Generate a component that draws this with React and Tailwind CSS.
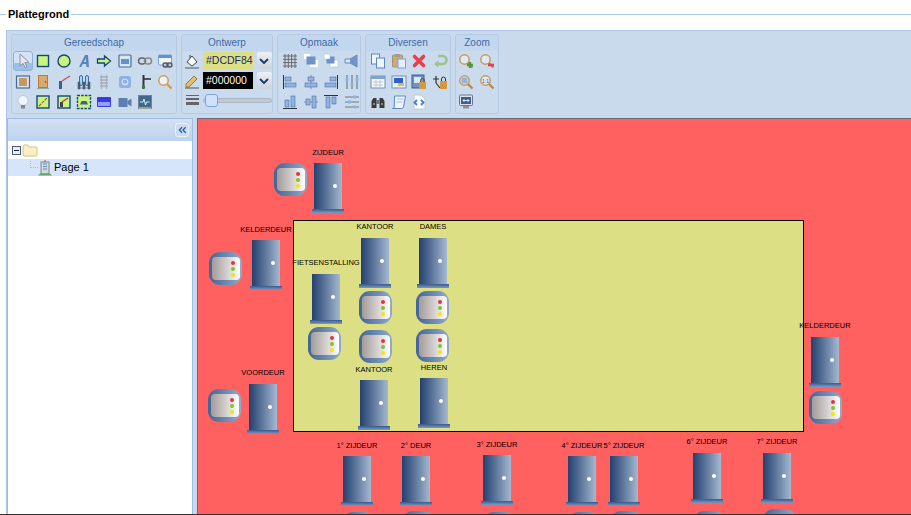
const doors = [
  { l: "ZIJDEUR", x: 314, y: 163, ly: 153 },
  { l: "KELDERDEUR", x: 252, y: 240, ly: 230 },
  { l: "FIETSENSTALLING", x: 312, y: 274, ly: 263 },
  { l: "KANTOOR", x: 361, y: 238, ly: 227 },
  { l: "DAMES", x: 419, y: 238, ly: 227 },
  { l: "KANTOOR", x: 360, y: 380, ly: 370 },
  { l: "HEREN", x: 420, y: 378, ly: 368 },
  { l: "VOORDEUR", x: 249, y: 384, ly: 373 },
  { l: "KELDERDEUR", x: 811, y: 337, ly: 326 },
  { l: "1° ZIJDEUR", x: 343, y: 456, ly: 446 },
  { l: "2° DEUR", x: 402, y: 456, ly: 446 },
  { l: "3° ZIJDEUR", x: 483, y: 455, ly: 445 },
  { l: "4° ZIJDEUR", x: 568, y: 456, ly: 446 },
  { l: "5° ZIJDEUR", x: 610, y: 456, ly: 446 },
  { l: "6° ZIJDEUR", x: 693, y: 453, ly: 442 },
  { l: "7° ZIJDEUR", x: 763, y: 453, ly: 442 },
];
const ctrls = [
  [274, 163], [209, 252], [308, 327], [359, 291], [416, 291], [359, 330], [416, 329], [208, 389], [809, 391],
  [342, 512], [402, 511], [483, 512], [568, 512], [610, 511], [693, 511], [763, 509],
];

function Door({ d }) {
  return (
    <>
      <div className="absolute w-[100px] text-center text-[7.500px] leading-[10px] text-black whitespace-nowrap" style={{ left: d.x - 234, top: d.ly - 124 }}>{d.l}</div>
      <div className="absolute w-[28px] h-[46px] bg-linear-to-r from-[#24406f] to-[#a5b9d0]" style={{ left: d.x - 198, top: d.y - 119 }}>
        <div className="absolute left-[19px] top-[21px] w-[4px] h-[4px] rounded-full bg-white" />
      </div>
      <div className="absolute w-[32px] h-[4px] bg-linear-to-b from-[#3b5a8c] to-[#7b9ac4]" style={{ left: d.x - 200, top: d.y - 73 }} />
    </>
  );
}
function Ctrl({ x, y }) {
  return (
    <div className="absolute w-[33px] h-[33px] rounded-[11px] pl-[3px] pr-[2px] py-[5px] bg-linear-to-r from-[#426495] to-[#92abcb]" style={{ left: x - 198, top: y - 119 }}>
      <div className="relative w-full h-full rounded-[4px] bg-linear-to-r from-[#a39b99] to-white">
        <div className="absolute left-[19px] top-[4px] w-[4px] h-[4px] rounded-full bg-[#e8303c]" />
        <div className="absolute left-[19px] top-[10px] w-[4px] h-[4px] rounded-full bg-[#7cc628]" />
        <div className="absolute left-[19px] top-[16px] w-[4px] h-[4px] rounded-full bg-[#f2e800]" />
      </div>
    </div>
  );
}

const S = ({ children }) => <svg viewBox="0 0 16 16" width="16" height="16" fill="none">{children}</svg>;
const Mag = ({ inner }) => (
  <S>
    <circle cx="6.500" cy="6.500" r="4.700" fill="#dfeaf6" stroke="#c79a5a" strokeWidth="1.500" />
    <path d="M10 10l4.500 4.500" stroke="#b8863f" strokeWidth="2.200" />
    {inner}
  </S>
);
const blue = "#8fb4e2", dk = "#3c5f96";

const tools = [
  <div key="0" className="w-[20px] h-[20px] rounded-[3px] border border-[#8fb0dc] bg-linear-to-b from-[#d3e2f6] from-60% to-[#9cc0ea] to-60% flex items-center justify-center">
    <S><path d="M5 1l0 12 3-2.600 2.200 4.400 1.800-.9-2.200-4.300 4-.4z" fill="#e4e8ee" stroke="#8d939e" /></S>
  </div>,
  <S key="1"><rect x="2.500" y="2.500" width="11" height="11" fill="#c9f57e" stroke="#13487a" strokeWidth="1.400" /></S>,
  <S key="2"><circle cx="8" cy="8" r="6" fill="#c9f57e" stroke="#13487a" strokeWidth="1.400" /></S>,
  <S key="3"><path d="M3 14L9 2h3l1 12h-2.600l-.2-3H6.800l-1.500 3zM7.800 9h2.200l-.3-4z" fill="#5a84c0" /></S>,
  <S key="4"><path d="M1.500 6h7V3l6 5-6 5v-3h-7z" fill="#c9f57e" stroke="#13487a" strokeWidth="1.300" /></S>,
  <S key="5"><rect x="2" y="2" width="12" height="12" rx="1" fill="#d8e6f4" stroke="#4a6ea0" strokeWidth="1.200" /><rect x="4" y="6" width="8" height="5" fill="#5f93c9" /></S>,
  <S key="6"><rect x="1.500" y="5" width="7" height="6" rx="3" stroke="#666" strokeWidth="1.500" /><rect x="7.500" y="5" width="7" height="6" rx="3" stroke="#888" strokeWidth="1.500" /></S>,
  <S key="7"><rect x="1.500" y="2" width="13" height="10" rx="1" fill="#eef4fb" stroke="#7ea2d0" /><rect x="1.500" y="2" width="13" height="3" fill="#5f93d9" /><rect x="6" y="10" width="5" height="4" rx="2" stroke="#555" strokeWidth="1.300" /><rect x="10" y="10" width="5" height="4" rx="2" stroke="#555" strokeWidth="1.300" /></S>,
  <S key="8"><rect x="1.500" y="2" width="13" height="12" fill="#d8e3f0" stroke="#4a6a94" strokeWidth="1.200" /><rect x="4" y="4" width="8" height="8" fill="#c59a5e" /></S>,
  <S key="9"><rect x="3.500" y="1.500" width="9" height="12" fill="#dba96b" stroke="#b67c3e" /><circle cx="10.500" cy="8" r=".8" fill="#7a4a1a" /><path d="M2 14.500h12" stroke="#8aa" /></S>,
  <S key="10"><rect x="3" y="7" width="3" height="8" fill="#3c5f96" /><path d="M6 7l8-5" stroke="#c65050" strokeWidth="1.400" /></S>,
  <S key="11"><rect x="3.500" y="1.500" width="3" height="10" rx="1.500" fill="#a8d4f4" stroke="#3c6ea8" /><rect x="9.500" y="1.500" width="3" height="10" rx="1.500" fill="#a8d4f4" stroke="#3c6ea8" /><path d="M2 15V8h2v7zM7 15V8h2v7zM12 15V8h2v7zM2 14h12" fill="#4a5a72" stroke="#4a5a72" strokeWidth=".6" /></S>,
  <S key="12"><path d="M5.500 1v14M10.500 1v14M4 3h8M4 6h8M4 9h8M4 12h8" stroke="#a7afb8" strokeWidth="1.300" /></S>,
  <S key="13"><rect x="2" y="2" width="12" height="12" rx="2.500" fill="#8fb2e6" /><circle cx="8" cy="8" r="3" stroke="#dbe8f8" /><path d="M5.500 10h5" stroke="#dbe8f8" /></S>,
  <S key="14"><path d="M6.500 1v14" stroke="#333" strokeWidth="2" /><path d="M7 5h7" stroke="#333" strokeWidth="1.600" /><circle cx="6.500" cy="13" r="1.700" fill="#3a7a3a" /></S>,
  <S key="15"><circle cx="6.500" cy="6.500" r="4.700" fill="#eef3f9" stroke="#cf9a55" strokeWidth="1.500" /><path d="M10 10l4.500 4.500" stroke="#cf9a55" strokeWidth="2.200" /></S>,
  <S key="16"><circle cx="8" cy="6.500" r="5" fill="#f1f5fa" stroke="#b9c7d6" /><rect x="6" y="11" width="4" height="3.500" fill="#7f8894" /></S>,
  <S key="17"><rect x="2" y="2" width="12" height="12" fill="#c9f57e" stroke="#13487a" strokeWidth="1.400" /><path d="M4 12L12 4" stroke="#b5543a" strokeWidth="1.200" strokeDasharray="3 1" /></S>,
  <S key="18"><rect x="2" y="2" width="12" height="12" fill="#c9f57e" stroke="#13487a" strokeWidth="1.400" /><rect x="4" y="8" width="3" height="5" fill="#444" /><path d="M6 8l6-4" stroke="#c64040" strokeWidth="1.500" /></S>,
  <S key="19"><rect x="1.500" y="1.500" width="13" height="13" fill="#c9f57e" stroke="#13487a" strokeWidth="1.400" strokeDasharray="2.500 1.200" /><path d="M4 10.500l1.500-3.500h5l1.500 3.500z" fill="#44608a" /></S>,
  <S key="20"><rect x="1" y="3" width="14" height="10" rx="1" fill="#3a3ae8" /><rect x="2" y="8" width="12" height="4" fill="#8fa4f4" /></S>,
  <S key="21"><rect x="1.500" y="4" width="9" height="9" fill="#5b7fae" /><path d="M10.500 7l4-2.500v8l-4-2.500z" fill="#5b7fae" /></S>,
  <S key="22"><rect x="1.500" y="1.500" width="13" height="13" fill="#44678f" stroke="#6f8598" /><path d="M3 8h3l1-3 1.500 6 1-3h3" stroke="#dff" strokeWidth=".9" /><path d="M2 14h12" stroke="#b6b08e" strokeWidth="1.500" /></S>,
];
const opmaak = [
  <S key="0"><path d="M3 1v14M6.300 1v14M9.600 1v14M13 1v14M1 3h14M1 6.300h14M1 9.600h14M1 13h14" stroke="#6a6a6a" /></S>,
  <S key="1"><rect x="7" y="7" width="8" height="7" fill="#fff" /><rect x="1" y="1" width="6" height="5" fill="#fff" /><rect x="3.500" y="3.500" width="9" height="8" fill="#6f92cc" /></S>,
  <S key="2"><rect x="7" y="7" width="8" height="7" fill="#fff" stroke="#9bb" strokeWidth=".5" /><rect x="3.500" y="3.500" width="8" height="7" fill="#6f92cc" /><rect x="1" y="1" width="6" height="5" fill="#fff" stroke="#9bb" strokeWidth=".5" /></S>,
  <S key="3"><path d="M1 6h5l7-4v12l-7-4H1z" fill="#dbe6f4" stroke="#6f88a8" /><path d="M6 6l7-4v12l-7-4z" fill="#6f94c9" /></S>,
  <S key="4"><path d="M1.500 1v14" stroke="#333" /><rect x="3" y="3" width="6" height="4" fill={blue} stroke={dk} strokeWidth=".5" /><rect x="3" y="9" width="11" height="4" fill={blue} stroke={dk} strokeWidth=".5" /></S>,
  <S key="5"><path d="M8 1v14" stroke="#888" /><rect x="5" y="3" width="6" height="4" fill={blue} stroke={dk} strokeWidth=".5" /><rect x="2" y="9" width="12" height="4" fill={blue} stroke={dk} strokeWidth=".5" /></S>,
  <S key="6"><path d="M14.500 1v14" stroke="#333" /><rect x="7" y="3" width="6" height="4" fill={blue} stroke={dk} strokeWidth=".5" /><rect x="2" y="9" width="11" height="4" fill={blue} stroke={dk} strokeWidth=".5" /></S>,
  <S key="7"><path d="M3 1v14M8 1v14M13 1v14" stroke="#666" /><rect x="1.500" y="4" width="3" height="3" fill={blue} /><rect x="6.500" y="9" width="3" height="3" fill={blue} /><rect x="11.500" y="4" width="3" height="3" fill={blue} /></S>,
  <S key="8"><path d="M1 14.500h14" stroke="#333" /><rect x="3" y="6" width="4" height="7" fill={blue} stroke={dk} strokeWidth=".5" /><rect x="9" y="2" width="4" height="11" fill={blue} stroke={dk} strokeWidth=".5" /></S>,
  <S key="9"><path d="M1 8h14" stroke="#888" /><rect x="3" y="5" width="4" height="6" fill={blue} stroke={dk} strokeWidth=".5" /><rect x="9" y="2" width="4" height="12" fill={blue} stroke={dk} strokeWidth=".5" /></S>,
  <S key="10"><path d="M1 1.500h14" stroke="#333" /><rect x="3" y="3" width="4" height="11" fill={blue} stroke={dk} strokeWidth=".5" /><rect x="9" y="3" width="4" height="7" fill={blue} stroke={dk} strokeWidth=".5" /></S>,
  <S key="11"><path d="M1 3h14M1 8h14M1 13h14" stroke="#777" /><rect x="9" y="1.500" width="3" height="3" fill={blue} /><rect x="4" y="6.500" width="3" height="3" fill={blue} /><rect x="9" y="11.500" width="3" height="3" fill={blue} /></S>,
];
const diversen = [
  <S key="0"><rect x="1.500" y="1" width="8" height="10" fill="#eef4fb" stroke="#5f86bd" /><rect x="6.500" y="5" width="8" height="10" fill="#eef4fb" stroke="#5f86bd" /></S>,
  <S key="1"><rect x="1.500" y="2" width="10" height="12" rx="1" fill="#c9ab82" stroke="#a98f6c" /><rect x="4" y="1" width="5" height="3" fill="#a99a84" /><rect x="7" y="6" width="7.500" height="9" fill="#e6eff9" stroke="#7fa2d0" /></S>,
  <S key="2"><path d="M3.500 3.500l9 9M12.500 3.500l-9 9" stroke="#e8404c" strokeWidth="3.600" strokeLinecap="round" /></S>,
  <S key="3"><path d="M6 3h4.500a3.500 3.500 0 0 1 0 8H3.500" stroke="#9ac48c" strokeWidth="2.600" /><path d="M6.500 7.500L2 11l4.500 3.500z" fill="#9ac48c" /></S>,
  <S key="4"><rect x="1" y="2" width="14" height="12" fill="#f4f7fb" stroke="#6f8fb8" /><rect x="1" y="2" width="14" height="3" fill="#7fa2d0" /><path d="M3 8h10M3 11h10M6 6v7M10 6v7" stroke="#b5c2d1" strokeWidth=".8" /></S>,
  <S key="5"><rect x="1" y="2" width="14" height="12" fill="#e9eff7" stroke="#7390b4" /><rect x="3" y="4" width="9" height="5" fill="#2b62c9" /><rect x="7" y="9" width="6" height="3" fill="#e4b45a" /></S>,
  <S key="6"><rect x="1" y="1" width="12" height="13" fill="#6e94c4" stroke="#3f5d85" /><rect x="3" y="3" width="7" height="6" fill="#dbe8f4" /><rect x="8" y="8" width="7" height="7" fill="#d29a3c" /><path d="M9.500 8V6.500a2 2 0 0 1 4 0V8" stroke="#555" /></S>,
  <S key="7"><path d="M1 5h6M4 2v7M4 9l4 5" stroke="#333" strokeWidth="1.200" /><rect x="8" y="7" width="7" height="8" fill="#d29a3c" /><path d="M9.500 7V5a2 2 0 0 1 4 0v2" stroke="#333" /></S>,
  <S key="8"><path d="M1.500 14V7l2-3h3v10zM9.500 14V4h3l2 3v7z" fill="#3b3b3b" /><rect x="6" y="6" width="4" height="4" fill="#777" /><path d="M3 10h2M11 10h2" stroke="#ccc" /></S>,
  <S key="9"><path d="M3.500 2h11l-2 11c-.3 1-1 1.500-2 1.500H1.500c1 0 1.600-.5 1.800-1.500z" fill="#eef4fb" stroke="#5f86bd" /><path d="M6 5h6M5.500 8h6" stroke="#a8c0de" /></S>,
  <S key="10"><path d="M3 1h7l4 4v10H3z" fill="#fff" stroke="#c0c8d2" /><path d="M6 6L3.500 8.500 6 11M10 6l2.500 2.500L10 11" stroke="#3d7fd0" strokeWidth="1.800" /></S>,
];
const zoom = [
  <Mag key="0" inner={<path d="M9 12h6M12 9v6" stroke="#4a9a3a" strokeWidth="2.400" />} />,
  <Mag key="1" inner={<path d="M9 12h6" stroke="#e0404c" strokeWidth="2.600" />} />,
  <Mag key="2" inner={<rect x="3.500" y="3.500" width="6" height="6" fill="#8fb4e2" />} />,
  <Mag key="3" inner={<text x="6.500" y="8.500" fontSize="5" textAnchor="middle" fill="#557" fontFamily="Liberation Sans">1:1</text>} />,
  <S key="4"><rect x="1.500" y="1" width="13" height="10.500" rx="1" fill="#dce2e8" stroke="#6a7a8a" /><rect x="3" y="3" width="10" height="7" fill="#3c5f96" /><path d="M5 6.500h6M5 6.500l1.500-1.500M5 6.500L6.500 8M11 6.500L9.500 5M11 6.500L9.500 8" stroke="#fff" strokeWidth=".8" /><rect x="5" y="12" width="6" height="2.500" fill="#8a929a" /></S>,
];

function Group({ title, className, children }) {
  return (
    <div className={`flex flex-col h-[80px] rounded-[3px] border border-[#b5cbe4] bg-[#cbdbee] ${className}`}>
      <div className="h-[16px] bg-[#c2d6ee] rounded-t-[3px] text-center text-[10px] leading-[15px] text-[#3e6aa8]">{title}</div>
      {children}
    </div>
  );
}
const Cell = ({ children }) => <div className="flex items-center justify-center">{children}</div>;
function IconGrid({ cols, items, className }) {
  return <div className={`grid auto-rows-[20.500px] ${cols} ${className}`}>{items.map((t, i) => <Cell key={i}>{t}</Cell>)}</div>;
}
const Chevron = () => (
  <div className="w-[16px] h-full ml-px rounded-[2px] bg-linear-to-b from-[#eef1f5] to-[#ccd3dc] flex items-center justify-center">
    <svg viewBox="0 0 10 6" width="10" height="6"><path d="M1 1l4 4 4-4" stroke="#1f3f7a" strokeWidth="2" fill="none" /></svg>
  </div>
);
function ColorRow({ icon, value, className }) {
  return (
    <div className="flex items-center h-[17px] gap-[3px]">
      <div className="w-[16px] flex justify-center">{icon}</div>
      <div className={`w-[53px] h-full text-[10.500px] leading-[17px] pl-[3px] ${className}`}>{value}</div>
      <Chevron />
    </div>
  );
}

export default function App() {
  return (
    <div className="w-[911px] h-[515px] overflow-hidden bg-white font-['Liberation_Sans',Arial,sans-serif]">
      <div className="h-[30px] flex items-start">
        <div className="mt-[14px] w-[6px] h-px bg-[#a9c8f2]" />
        <span className="ml-[2px] mt-[7px] text-[11px] leading-[14px] font-bold text-black">Plattegrond</span>
        <div className="ml-[2px] mt-[14px] flex-1 h-px bg-[#a9c8f2]" />
      </div>
      <div className="ml-[6px] h-[484px] flex flex-col border-l border-t border-[#a9c4e6] bg-[#cadaed]">
        <div className="h-[87px] shrink-0 flex gap-[4px] pl-[4px] pt-[3px]">
          <Group title="Gereedschap" className="w-[166px]"><IconGrid cols="grid-cols-[repeat(8,20.300px)]" items={tools} className="pl-px" /></Group>
          <Group title="Ontwerp" className="w-[92px]">
            <div className="flex flex-col pl-[2px] pt-px gap-[3px]">
              <ColorRow value="#DCDF84" className="bg-[#dcdf84] text-[#1c2a6a]" icon={<S><path d="M3 9l5-6 5 6-5 4z" fill="#fff" stroke="#444" /><path d="M6 5V2" stroke="#444" /><path d="M1 15h14" stroke="#555" /></S>} />
              <ColorRow value="#000000" className="bg-black text-white" icon={<S><path d="M2 11L10 3l3 3-8 8H2z" fill="#e8bd6a" stroke="#9a7a3a" /><path d="M1 15h14" stroke="#555" /></S>} />
              <div className="flex items-center h-[16px] gap-[3px]">
                <div className="w-[16px] flex flex-col items-center gap-[2px]">
                  <div className="w-[13px] h-px bg-[#666]" /><div className="w-[13px] h-[2px] bg-[#666]" /><div className="w-[13px] h-[3px] bg-[#666]" />
                </div>
                <div className="relative w-[69px] h-[5px] rounded-full bg-[#c0cad6] border border-[#aab6c4]">
                  <div className="absolute left-[1px] -top-[5px] w-[13px] h-[13px] rounded-[3px] bg-[#cfe2fb] border border-[#7fa6dc]" />
                </div>
              </div>
            </div>
          </Group>
          <Group title="Opmaak" className="w-[84px]"><IconGrid cols="grid-cols-[repeat(4,20.500px)]" items={opmaak} className="pl-[2px]" /></Group>
          <Group title="Diversen" className="w-[86px]"><IconGrid cols="grid-cols-[repeat(4,20.500px)]" items={diversen} className="pl-[2px]" /></Group>
          <Group title="Zoom" className="w-[44px]"><IconGrid cols="grid-cols-[repeat(2,20.500px)]" items={zoom} /></Group>
        </div>
        <div className="flex flex-1 min-h-0">
          <div className="w-[186px] flex flex-col border-l border-r border-t border-[#9fbde4] bg-white">
            <div className="h-[22px] shrink-0 flex items-center justify-end pr-[3px] bg-linear-to-b from-[#d3e1f2] to-[#bcd2ee]">
              <div className="w-[14px] h-[14px] rounded-[3px] border border-[#e8f0fa] bg-[#c9dcf2] flex items-center justify-center">
                <svg viewBox="0 0 10 8" width="9" height="8"><path d="M4.500 1L1.500 4l3 3M8.500 1l-3 3 3 3" stroke="#2b5aa0" strokeWidth="1.400" fill="none" /></svg>
              </div>
            </div>
            <div className="h-[18px] shrink-0 flex items-center pl-[4px] gap-[1px]">
              <svg viewBox="0 0 9 9" width="9" height="9"><rect x=".5" y=".5" width="8" height="8" fill="#e8eef6" stroke="#4a5a78" /><path d="M2 4.500h5" stroke="#223" /></svg>
              <svg viewBox="0 0 16 13" width="16" height="13"><path d="M1 3l1-2h4l1 2h7a1 1 0 0 1 1 1v7a1 1 0 0 1-1 1H2a1 1 0 0 1-1-1z" fill="#faf0c4" stroke="#d9c27c" /></svg>
            </div>
            <div className="h-[17px] shrink-0 flex items-center pl-[22px] bg-[#d6e5f9]">
              <div className="w-[8px] h-[7px] -mt-[6px] border-l border-b border-dotted border-[#bbb]" />
              <svg viewBox="0 0 14 16" width="14" height="16" className="shrink-0"><rect x="3" y="2" width="8" height="12" fill="#cfd8e2" stroke="#7f8a96" /><path d="M5 4h4M5 6.500h4M5 9h4" stroke="#6f8fb8" /><path d="M7 0v2" stroke="#c44" /><path d="M0 15.500l2-2h10l2 2z" fill="#5fa85f" /></svg>
              <span className="ml-[2px] text-[11px] text-black">Page 1</span>
            </div>
          </div>
          <div className="ml-[4px] flex-1 relative overflow-hidden bg-[#ff6060] border-l border-t border-[#6a6a7a]">
            <div className="absolute left-[95px] top-[101px] w-[511px] h-[212px] border border-black bg-[#dcdf84]" />
            {doors.map((d, i) => <Door key={i} d={d} />)}
            {ctrls.map(([x, y], i) => <Ctrl key={i} x={x} y={y} />)}
          </div>
        </div>
      </div>
      <div className="h-px bg-[#333]" />
    </div>
  );
}
